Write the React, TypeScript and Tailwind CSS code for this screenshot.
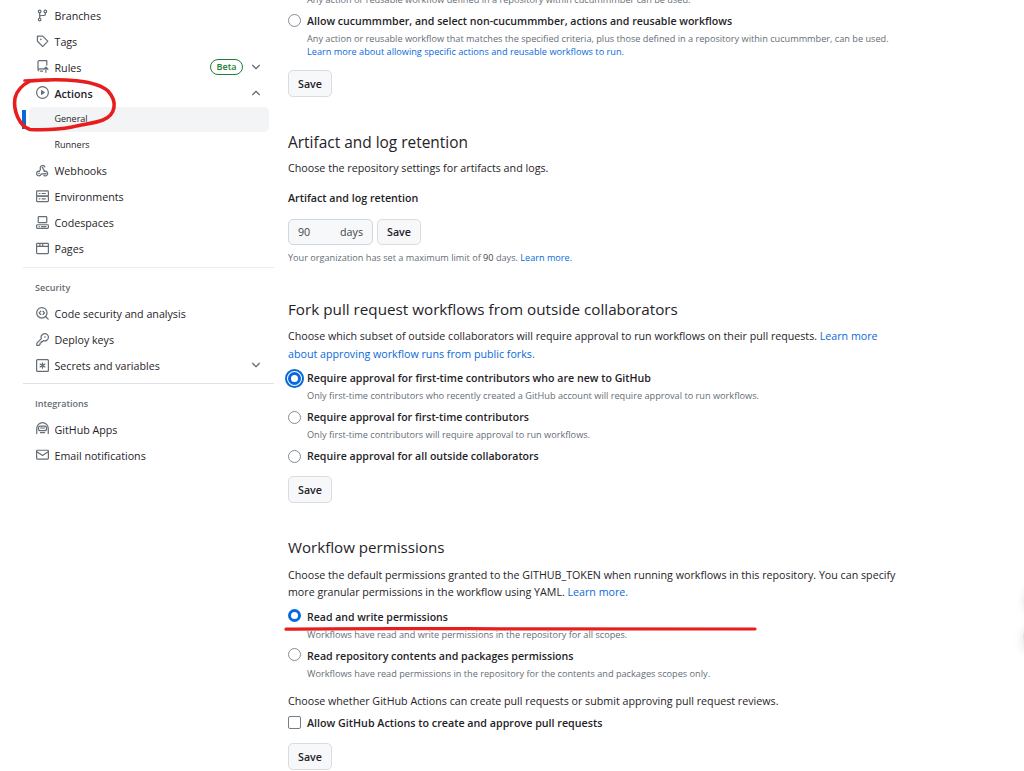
import type { ReactNode } from "react";

function Icon({ children }: { children: ReactNode }) {
  return (
    <svg
      className="mr-[0.5px] mb-[1.5px] size-[13px] shrink-0 text-[#656d76]"
      viewBox="0 0 16 16"
      fill="none"
      stroke="currentColor"
      strokeWidth="1.5"
      strokeLinecap="round"
      strokeLinejoin="round"
    >
      {children}
    </svg>
  );
}

const branch = (
  <Icon>
    <circle cx="4.5" cy="3" r="1.6" />
    <circle cx="4.5" cy="13" r="1.6" />
    <circle cx="11.5" cy="3" r="1.6" />
    <path d="M4.5 4.8v6.4M11.5 4.8V6A2 2 0 0 1 9.5 8h-3a2 2 0 0 0-2 2" />
  </Icon>
);
const tag = (
  <Icon>
    <path d="M1.75 1.5v6.03c0 .07.03.13.07.18l6.25 6.25a.25.25 0 0 0 .36 0l6.03-6.03a.25.25 0 0 0 0-.36L8.21 1.32a.25.25 0 0 0-.18-.07H2a.25.25 0 0 0-.25.25Z" />
    <circle cx="6" cy="5.4" r="1" fill="currentColor" stroke="none" />
  </Icon>
);
const rules = (
  <Icon>
    <path d="M13.25 6.2V.75H4.2A1.75 1.75 0 0 0 2.45 2.5v9.3a1.6 1.6 0 0 0 .9 1.5M2.6 12.2c.2-.8.8-1.3 1.6-1.3h4.3M5.5 13.6h2.7M12.2 15.2V9.3M9.7 11.4l2.5-2.5 2.5 2.5" />
  </Icon>
);
const play = (
  <Icon>
    <circle cx="8" cy="8" r="7.25" />
    <path d="M6.2 5.2v5.6a.3.3 0 0 0 .5.2l4.2-2.8a.25.25 0 0 0 0-.4L6.7 5a.3.3 0 0 0-.5.2Z" fill="currentColor" stroke="none" />
  </Icon>
);
const webhook = (
  <Icon>
    <path d="M5.6 6.4a3 3 0 1 1 5.3-2.8M8 4.3l2.7 4.9M5.6 6.4 3.9 9.5M3.3 8.8a2.9 2.9 0 1 0 3.2 3.4h4.9M10 9.1a2.9 2.9 0 1 1-.2 5" />
    <circle cx="8" cy="4.2" r=".9" fill="currentColor" stroke="none" />
    <circle cx="3.7" cy="11.8" r=".9" fill="currentColor" stroke="none" />
    <circle cx="12.1" cy="11.8" r=".9" fill="currentColor" stroke="none" />
  </Icon>
);
const server = (
  <Icon>
    <rect x=".75" y="1" width="14.5" height="6.6" rx="1" />
    <rect x=".75" y="7.6" width="14.5" height="6.6" rx="1" />
    <path d="M4 4.3h.8M7.5 4.3h4M4 10.9h.8M7.5 10.9h4" />
  </Icon>
);
const codespaces = (
  <Icon>
    <rect x="2.75" y=".75" width="10.5" height="7.5" rx="1" />
    <rect x=".75" y="10.75" width="14.5" height="4.5" rx="1" />
    <path d="M3.8 13h.4M6.8 13h5.4" />
  </Icon>
);
const browser = (
  <Icon>
    <rect x=".75" y="1.75" width="14.5" height="12.5" rx="1" />
    <path d="M1 5.25h14M4.75 2v3M8.25 2v3" />
  </Icon>
);
const codescan = (
  <Icon>
    <circle cx="7.2" cy="7.2" r="6.4" />
    <path d="m12 12 3 3M5.8 5.2 3.9 7.2l1.9 2M8.6 5.2l1.9 2-1.9 2" />
  </Icon>
);
const key = (
  <Icon>
    <path d="M6.6 6.9a4.5 4.5 0 1 1 2.5 2.5L8 10.5H6.5V12L5 12.3v1.6l-1.2 1.3H1v-2.7l5.6-5.6Z" />
    <circle cx="11" cy="5" r="1" fill="currentColor" stroke="none" />
  </Icon>
);
const asterisk = (
  <Icon>
    <rect x=".75" y=".75" width="14.5" height="14.5" rx="1.2" />
    <path d="M8 4.7v6.6M5.1 6.3l5.8 3.4M10.9 6.3 5.1 9.7" />
  </Icon>
);
const hubot = (
  <Icon>
    <path d="M.9 14V7.9a7.1 7.1 0 0 1 14.2 0V14" />
    <rect x="3" y="5" width="10" height="5.6" rx="2.4" />
    <path d="M5.6 7.4h4.8M5.5 13.2h5" />
  </Icon>
);
const mail = (
  <Icon>
    <rect x=".75" y="2.75" width="14.5" height="11" rx="1" />
    <path d="m1 4.5 6.6 4.4a.8.8 0 0 0 .8 0L15 4.5" />
  </Icon>
);

function Chevron({ up = false }: { up?: boolean }) {
  return (
    <svg
      className="mb-[2px] h-[6px] w-[10px] shrink-0 text-[#656d76]"
      viewBox="0 0 10 6"
      fill="none"
      stroke="currentColor"
      strokeWidth="1.25"
      strokeLinecap="round"
      strokeLinejoin="round"
    >
      <path d={up ? "M1.6 4.7 5 1.3l3.4 3.4" : "M1.6 1.3 5 4.7l3.4-3.4"} />
    </svg>
  );
}

function NavItem({
  icon,
  children,
  bold = false,
  trailing,
}: {
  icon: ReactNode;
  children: ReactNode;
  bold?: boolean;
  trailing?: ReactNode;
}) {
  return (
    <li className="flex h-[25.9px] items-center pr-[13px] pl-[35.5px]">
      {icon}
      <span className={bold ? "ml-[5.5px] flex-1 text-[10.7px] font-semibold" : "ml-[5.5px] flex-1 text-[10.68px]"}>
        {children}
      </span>
      {trailing}
    </li>
  );
}

function NavHeading({ children }: { children: ReactNode }) {
  return (
    <h3 className="flex h-[26px] items-center pl-[35px] text-[9.05px] font-semibold text-[#656d76]">{children}</h3>
  );
}

function Title({ className, children }: { className: string; children: ReactNode }) {
  return <h2 className={`h-[22px] leading-[22px] ${className}`}>{children}</h2>;
}

function Para({ className, children }: { className: string; children: ReactNode }) {
  return <p className={`h-[17px] leading-[17px] ${className}`}>{children}</p>;
}

function Note({ className, children }: { className: string; children: ReactNode }) {
  return <p className={`h-[13px] leading-[13px] text-[#656d76] ${className}`}>{children}</p>;
}

function Link({ children }: { children: ReactNode }) {
  return (
    <a href="#" className="text-[#0969da]">
      {children}
    </a>
  );
}

function Save({ className }: { className: string }) {
  return (
    <button
      className={`flex w-[44px] items-center justify-center rounded-[5px] border border-[#d9dce0] bg-[#f6f8fa] text-[10.7px] font-semibold ${className}`}
    >
      Save
    </button>
  );
}

function Choice({
  state = "off",
  offset = "mt-0",
  className,
  children,
}: {
  state?: "off" | "on" | "focus" | "box";
  offset?: string;
  className: string;
  children: ReactNode;
}) {
  const marks = {
    off: "rounded-full border border-[#868d95]",
    on: "rounded-full border-[3px] border-[#0969da]",
    focus: "rounded-full border-[3px] border-[#0969da] outline-2 outline-offset-1 outline-[#0969da]",
    box: "rounded-[2px] border border-[#767c84]",
  };
  return (
    <label className={`flex h-4 leading-4 font-semibold ${className}`}>
      <span className={`mr-[6px] size-[13px] shrink-0 bg-white ${offset} ${marks[state]}`} />
      {children}
    </label>
  );
}

export default function App() {
  return (
    <div className="relative flex h-[771px] w-[1024px] overflow-hidden bg-white font-['Open_Sans','Noto_Sans',sans-serif] whitespace-nowrap text-[#1f2328]">
      <nav className="w-[274px] shrink-0 pt-[3px]">
        <ul>
          <NavItem icon={branch}>Branches</NavItem>
          <NavItem icon={tag}>Tags</NavItem>
          <NavItem
            icon={rules}
            trailing={
              <>
                <span className="mr-[8px] mb-[2px] flex h-[16px] w-[33px] items-center justify-center rounded-full border border-[#1a7f37] text-[9px] font-semibold text-[#1a7f37]">
                  Beta
                </span>
                <Chevron />
              </>
            }
          >
            Rules
          </NavItem>
          <NavItem icon={play} bold trailing={<Chevron up />}>
            Actions
          </NavItem>
          <li className="flex h-[25px] items-center pl-[22px] text-[9px]">
            <span className="h-[19px] w-[4px] bg-[#0969da]" />
            <span className="ml-[3px] flex h-[25px] w-[240px] items-center rounded-[5px] bg-[#f3f4f6] pl-[25.5px]">
              General
            </span>
          </li>
          <li className="flex h-[27px] items-center pl-[54.5px] text-[9px]">Runners</li>
          <NavItem icon={webhook}>Webhooks</NavItem>
          <NavItem icon={server}>Environments</NavItem>
          <NavItem icon={codespaces}>Codespaces</NavItem>
          <NavItem icon={browser}>Pages</NavItem>
        </ul>
        <hr className="mt-[5px] ml-[23px] border-[#eaecef]" />
        <div className="mt-[6.5px]">
          <NavHeading>Security</NavHeading>
          <ul className="mt-[0.5px]">
            <NavItem icon={codescan}>Code security and analysis</NavItem>
            <NavItem icon={key}>Deploy keys</NavItem>
            <NavItem icon={asterisk} trailing={<Chevron />}>
              Secrets and variables
            </NavItem>
          </ul>
        </div>
        <hr className="mt-[4px] ml-[23px] border-[#dfe2e6]" />
        <div className="mt-[7px]">
          <NavHeading>Integrations</NavHeading>
          <ul>
            <NavItem icon={hubot}>GitHub Apps</NavItem>
            <NavItem icon={mail}>Email notifications</NavItem>
          </ul>
        </div>
      </nav>

      <main className="ml-[14px] flex-1">
        <section>
          <Note className="-mt-[7px] pl-[19px] text-[9.18px]">
            Any action or reusable workflow defined in a repository within cucummmber can be used.
          </Note>
          <Choice className="mt-[7px] text-[10.6px]" offset="mt-[0.5px]">
            Allow cucummmber, and select non-cucummmber, actions and reusable workflows
          </Choice>
          <Note className="mt-[3px] pl-[19px] text-[9.17px]">
            Any action or reusable workflow that matches the specified criteria, plus those defined in a repository
            within cucummmber, can be used.
          </Note>
          <Note className="pl-[19px] text-[9.19px]">
            <Link>Learn more about allowing specific actions and reusable workflows to run.</Link>
          </Note>
          <Save className="mt-[12px] h-[27px] pt-px" />
        </section>

        <section className="mt-[34px]">
          <Title className="text-[15.44px]">Artifact and log retention</Title>
          <Para className="mt-[7px] text-[10.72px]">Choose the repository settings for artifacts and logs.</Para>
          <Para className="mt-[13px] text-[10.7px] font-semibold">Artifact and log retention</Para>
          <div className="mt-[12px] flex gap-[4px]">
            <div className="flex h-[26px] w-[85px] items-center justify-between rounded-[5px] border border-[#d0d7de] bg-[#f6f8fa] px-[9px] text-[10.7px] text-[#3d434a]">
              <span>90</span>
              <span>days</span>
            </div>
            <Save className="h-[26px]" />
          </div>
          <Note className="mt-[6px] text-[9.14px]">
            Your organization has set a maximum limit of <span className="text-[#3d434a]">90</span> days.{" "}
            <Link>Learn more.</Link>
          </Note>
        </section>

        <section className="mt-[34px]">
          <Title className="text-[15.24px]">Fork pull request workflows from outside collaborators</Title>
          <Para className="mt-[8px] text-[10.67px]">
            Choose which subset of outside collaborators will require approval to run workflows on their pull requests.{" "}
            <Link>Learn more</Link>
          </Para>
          <Para className="mt-px text-[10.7px]">
            <Link>about approving workflow runs from public forks.</Link>
          </Para>
          <Choice state="focus" offset="mt-[2px]" className="mt-[7px] text-[10.64px]">
            Require approval for first-time contributors who are new to GitHub
          </Choice>
          <Note className="mt-[3px] pl-[19px] text-[9.19px]">
            Only first-time contributors who recently created a GitHub account will require approval to run workflows.
          </Note>
          <Choice offset="mt-[2px]" className="mt-[7px] text-[10.58px]">
            Require approval for first-time contributors
          </Choice>
          <Note className="mt-[3px] pl-[19px] text-[9.17px]">
            Only first-time contributors will require approval to run workflows.
          </Note>
          <Choice offset="mt-[2px]" className="mt-[7px] text-[10.6px]">
            Require approval for all outside collaborators
          </Choice>
          <Save className="mt-[12px] h-[27px] pt-px" />
        </section>

        <section className="mt-[33px]">
          <Title className="text-[15.13px]">Workflow permissions</Title>
          <Para className="mt-[8.5px] text-[10.7px]">
            Choose the default permissions granted to the GITHUB_TOKEN when running workflows in this repository. You
            can specify
          </Para>
          <Para className="text-[10.66px]">
            more granular permissions in the workflow using YAML. <Link>Learn more.</Link>
          </Para>
          <Choice state="on" className="mt-[8.5px] text-[10.54px]">
            Read and write permissions
          </Choice>
          <Note className="mt-[3px] pl-[19px] text-[9.17px]">
            Workflows have read and write permissions in the repository for all scopes.
          </Note>
          <Choice className="mt-[7px] text-[10.63px]">Read repository contents and packages permissions</Choice>
          <Note className="mt-[3px] pl-[19px] text-[9.18px]">
            Workflows have read permissions in the repository for the contents and packages scopes only.
          </Note>
          <Para className="mt-[13px] text-[10.69px]">
            Choose whether GitHub Actions can create pull requests or submit approving pull request reviews.
          </Para>
          <Choice state="box" offset="mt-px" className="mt-[5px] text-[10.71px]">
            Allow GitHub Actions to create and approve pull requests
          </Choice>
          <Save className="mt-[12px] h-[27px] pt-px" />
        </section>
      </main>

      <svg
        className="pointer-events-none absolute inset-0"
        width="1024"
        height="771"
        fill="none"
        stroke="#e81e1e"
        strokeLinecap="round"
        strokeLinejoin="round"
      >
        <path strokeWidth="2.6" d="M24.5 80.5C33 79.6 41 80.4 49 80.3" />
        <path
          strokeWidth="3.6"
          d="M30 81C62 78 96 80 108 91C118 102 115.5 115 103 120C94 123.5 84 124 72 127C59 129.5 42 130 30 129.5C19 126 13 110 15 98C17 90 24 84 30 81"
        />
        <path strokeWidth="3.2" d="M286 629.2C340 628.2 420 628.6 500 628.8L755 629" />
      </svg>
      <div className="absolute top-[586px] -right-[31px] size-[30px] rounded-full shadow-[0_0_10px_rgba(0,0,0,0.16)]" />
      <div className="absolute top-[622px] -right-[29px] size-[30px] rounded-full border border-[#d8dfe8] bg-white shadow-[0_3px_12px_rgba(0,0,0,0.13)]" />
    </div>
  );
}
